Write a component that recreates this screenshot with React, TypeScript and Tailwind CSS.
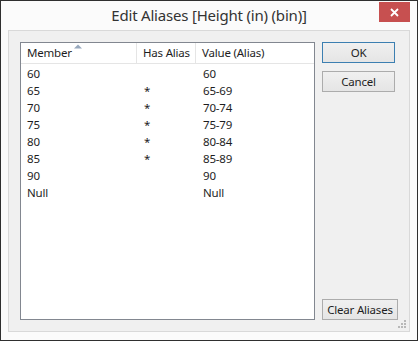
import React from 'react';

const rows: { member: string; has: boolean; value: string }[] = [
  { member: '60', has: false, value: '60' },
  { member: '65', has: true, value: '65-69' },
  { member: '70', has: true, value: '70-74' },
  { member: '75', has: true, value: '75-79' },
  { member: '80', has: true, value: '80-84' },
  { member: '85', has: true, value: '85-89' },
  { member: '90', has: false, value: '90' },
  { member: 'Null', has: false, value: 'Null' },
];

const font = { fontFamily: '"Noto Sans", "Open Sans", sans-serif' };

const Button = ({ label, primary, wide }: { label: string; primary?: boolean; wide?: boolean }) => (
  <button
    className={`h-[21px] ${wide ? 'w-[76px]' : 'w-[73px]'} border ${primary ? 'border-[#3c7fb1]' : 'border-[#acacac]'} bg-gradient-to-b from-[#f0f0f0] to-[#e5e5e5] text-[11.5px] tracking-[-0.2px] leading-none text-[#1e1e1e]`}
  >
    {label}
  </button>
);

export default function App() {
  return (
    <div
      className="relative w-[418px] h-[341px] border border-[#2f2f2f] bg-[#fbfbfb] flex flex-col text-[#1e1e1e]"
      style={font}
    >
      {/* Title bar */}
      <div className="relative h-[30px] flex items-center justify-center">
        <span className="text-[15px] tracking-[-0.2px] text-[#333]">Edit Aliases [Height (in) (bin)]</span>
        <div className="absolute right-[7px] top-[1px] w-[31px] h-[20px] bg-[#c75050] flex items-center justify-center">
          <svg width="9" height="9" viewBox="0 0 9 9">
            <path d="M1 1 L8 8 M8 1 L1 8" stroke="#fff" strokeWidth="1.8" />
          </svg>
        </div>
      </div>

      {/* Content */}
      <div className="relative mx-[7px] mb-[8px] flex-1 border border-[#d9d9d9] bg-[#f0f0f0] flex gap-[7px] pl-[11px] pt-[11px] pb-[11px]">
        {/* List */}
        <div className="w-[295px] h-[278px] border border-[#828790] bg-white text-[11.5px] tracking-[-0.2px]">
          <div className="relative h-[21px] flex border-b border-[#e5e5e5]">
            <div className="w-[116px] pl-[6px] flex items-center border-r border-[#e5e5e5]">Member</div>
            <svg className="absolute left-[53px] top-[1px]" width="8" height="5" viewBox="0 0 8 5">
              <path d="M0 4.5 L4 0.5 L8 4.5 Z" fill="#97a8bd" />
            </svg>
            <div className="w-[59px] pl-[6px] flex items-center border-r border-[#e5e5e5]">Has Alias</div>
            <div className="pl-[6px] flex items-center">Value (Alias)</div>
          </div>
          <div className="pt-[1px]">
            {rows.map((r) => (
              <div key={r.member} className="h-[17px] flex items-center">
                <div className="w-[117px] pl-[6px]">{r.member}</div>
                <div className="w-[59px] pl-[6px]">{r.has ? '*' : ''}</div>
                <div className="pl-[6px]">{r.value}</div>
              </div>
            ))}
          </div>
        </div>

        {/* Buttons */}
        <div className="flex flex-col gap-[8px]">
          <Button label="OK" primary />
          <Button label="Cancel" />
          <div className="flex-1" />
          <Button label="Clear Aliases" wide />
        </div>

        {/* Size grip */}
        <svg className="absolute right-[3px] bottom-[3px]" width="8" height="8" viewBox="0 0 8 8">
          <rect x="6" y="0" width="2" height="2" fill="#b8b8b8" />
          <rect x="3" y="3" width="2" height="2" fill="#b8b8b8" />
          <rect x="6" y="3" width="2" height="2" fill="#b8b8b8" />
          <rect x="0" y="6" width="2" height="2" fill="#b8b8b8" />
          <rect x="3" y="6" width="2" height="2" fill="#b8b8b8" />
          <rect x="6" y="6" width="2" height="2" fill="#b8b8b8" />
        </svg>
      </div>
    </div>
  );
}
